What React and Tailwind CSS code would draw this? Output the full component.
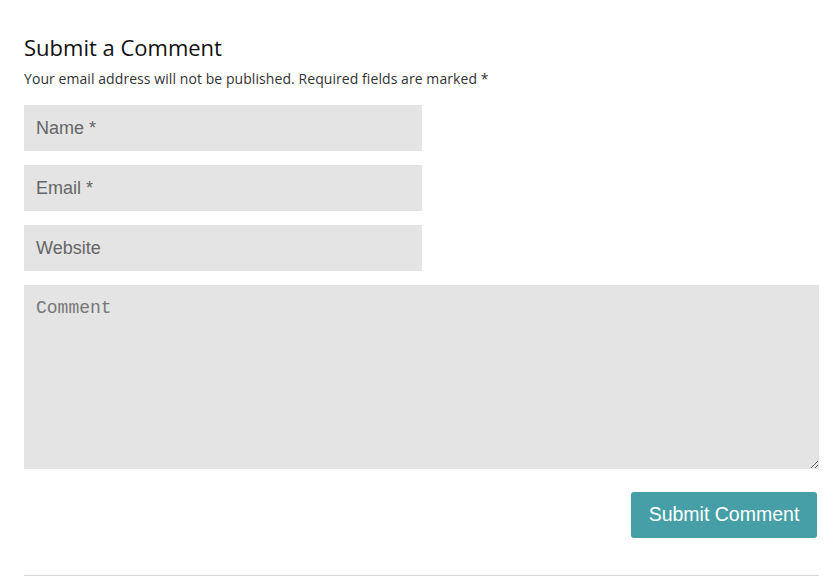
export default function App() {
  return (
    <div className="w-[835px] h-[576px] overflow-hidden bg-white pl-6 pt-[33px]">
      <h3 className="font-['Open_Sans',sans-serif] text-[22px] leading-[28px] text-[#111]">Submit a Comment</h3>
      <p className="mt-[8px] font-['Open_Sans',sans-serif] text-[14px] leading-[20px] tracking-[0.07px] text-[#333]">
        Your email address will not be published. Required fields are marked *
      </p>
      <form className="mt-[16px] flex w-[795px] flex-col">
        <input
          placeholder="Name *"
          className="w-[398px] h-[46px] bg-[#e4e4e4] px-3 font-['Liberation_Sans',sans-serif] text-[18px] text-[#666] placeholder:text-[#666] outline-none"
        />
        <input
          placeholder="Email *"
          className="mt-[14px] w-[398px] h-[46px] bg-[#e4e4e4] px-3 font-['Liberation_Sans',sans-serif] text-[18px] text-[#666] placeholder:text-[#666] outline-none"
        />
        <input
          placeholder="Website"
          className="mt-[14px] w-[398px] h-[46px] bg-[#e4e4e4] px-3 font-['Liberation_Sans',sans-serif] text-[18px] text-[#666] placeholder:text-[#666] outline-none"
        />
        <textarea
          placeholder="Comment"
          className="mt-[14px] w-[795px] h-[184px] bg-[#e4e4e4] px-3 py-[11px] font-['Liberation_Mono',monospace] text-[18px] leading-[24px] text-[#777] placeholder:text-[#777] outline-none"
        />
        <div className="mt-[23px] flex justify-end pr-[2px]">
          <button
            type="button"
            className="h-[46px] w-[186px] rounded-[3px] bg-[#469fa7] font-['Liberation_Sans',sans-serif] text-[19.5px] text-white"
          >
            Submit Comment
          </button>
        </div>
      </form>
      <div className="mt-[37px] h-px w-[795px] bg-[#d4d4d4]" />
    </div>
  );
}
